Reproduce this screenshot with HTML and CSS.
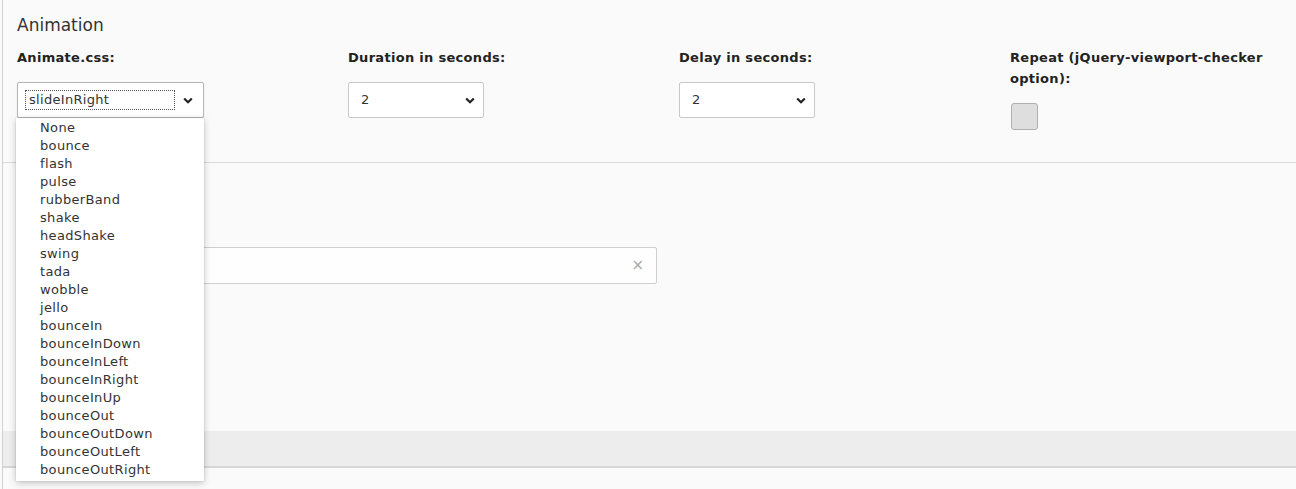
FILE: index.html
```html
<!DOCTYPE html>
<html>
<head>
<meta charset="utf-8">
<link rel="stylesheet" href="styles.css">
</head>
<body>
<div class="panel">
  <section class="top">
    <h2 class="title">Animation</h2>
    <div class="fields">
      <div class="field">
        <div class="label">Animate.css:</div>
        <div class="select select-wide focused">
          <span class="value focus-ring">slideInRight</span>
          <svg class="chev" width="10" height="7" viewBox="0 0 10 7"><polyline points="1.2,1.5 5,5.2 8.8,1.5" fill="none" stroke="#222" stroke-width="2.2"/></svg>
        </div>
      </div>
      <div class="field">
        <div class="label">Duration in seconds:</div>
        <div class="select">
          <span class="value">2</span>
          <svg class="chev" width="10" height="7" viewBox="0 0 10 7"><polyline points="1.2,1.5 5,5.2 8.8,1.5" fill="none" stroke="#222" stroke-width="2.2"/></svg>
        </div>
      </div>
      <div class="field">
        <div class="label">Delay in seconds:</div>
        <div class="select">
          <span class="value">2</span>
          <svg class="chev" width="10" height="7" viewBox="0 0 10 7"><polyline points="1.2,1.5 5,5.2 8.8,1.5" fill="none" stroke="#222" stroke-width="2.2"/></svg>
        </div>
      </div>
      <div class="field">
        <div class="label">Repeat (jQuery-viewport-checker option):</div>
        <div class="checkbox"></div>
      </div>
    </div>
  </section>
  <section class="middle">
    <div class="search">
      <span class="clear">×</span>
    </div>
  </section>
  <div class="band"></div>
  <div class="bottom"></div>

  <ul class="dropdown">
    <li>None</li>
    <li>bounce</li>
    <li>flash</li>
    <li>pulse</li>
    <li>rubberBand</li>
    <li>shake</li>
    <li>headShake</li>
    <li>swing</li>
    <li>tada</li>
    <li>wobble</li>
    <li>jello</li>
    <li>bounceIn</li>
    <li>bounceInDown</li>
    <li>bounceInLeft</li>
    <li>bounceInRight</li>
    <li>bounceInUp</li>
    <li>bounceOut</li>
    <li>bounceOutDown</li>
    <li>bounceOutLeft</li>
    <li>bounceOutRight</li>
  </ul>
</div>
</body>
</html>
```

FILE: styles.css
```css
html, body {
  margin: 0;
  padding: 0;
  background: #fafafa;
}
body {
  font-family: "DejaVu Sans", Verdana, sans-serif;
  color: #333;
  height: 489px;
  overflow: hidden;
}
.panel {
  position: relative;
  margin-left: 2px;
  border-left: 1px solid #d2d2d2;
  min-height: 489px;
}
.top {
  padding: 15px 0 32px 14px;
  border-bottom: 1px solid #d9d9d9;
}
.title {
  margin: 0 0 12px;
  font-size: 17px;
  line-height: 20px;
  font-weight: normal;
  color: #333;
}
.fields {
  display: grid;
  grid-template-columns: 331px 331px 331px 270px;
}
.label {
  font-size: 13px;
  letter-spacing: 0.3px;
  line-height: 21px;
  font-weight: bold;
  color: #222;
  margin-bottom: 14px;
}
.select {
  box-sizing: border-box;
  width: 136px;
  height: 36px;
  background: #fff;
  border: 1px solid #c8c8c8;
  border-radius: 2px;
  display: flex;
  align-items: center;
  padding: 0 8px 0 12px;
  font-size: 13px;
  letter-spacing: 0.3px;
  color: #333;
}
.select-wide {
  width: 187px;
  padding-left: 8px;
  padding-right: 10px;
}
.focused {
  border-color: #b5b5b5;
  box-shadow: 0 1px 2px rgba(0,0,0,0.08);
}
.value {
  flex: 1;
  line-height: 18px;
}
.focus-ring {
  flex: 0 0 auto;
  width: 148px;
  padding-left: 3px;
  box-sizing: border-box;
  outline: 1px dotted #555;
  margin-right: 9px;
}
.chev {
  display: block;
  flex: 0 0 auto;
}
.checkbox {
  box-sizing: border-box;
  width: 27px;
  height: 27px;
  margin-left: 1px;
  background: #dedede;
  border: 1px solid #b0b0b0;
  border-radius: 3px;
}
.middle {
  height: 268px;
  padding: 84px 0 0 14px;
  box-sizing: border-box;
}
.search {
  box-sizing: border-box;
  width: 640px;
  height: 37px;
  background: #fefefe;
  border: 1px solid #cfcfcf;
  border-radius: 2px;
  display: flex;
  justify-content: flex-end;
  align-items: center;
  padding-right: 12px;
}
.clear {
  font-size: 15px;
  color: #aaa;
  line-height: 1;
}
.band {
  height: 35px;
  background: #ededed;
  border-bottom: 2px solid #d6d6d6;
}
.bottom {
  height: 30px;
}
.dropdown {
  position: absolute;
  left: 13px;
  top: 118px;
  width: 188px;
  height: 363px;
  box-sizing: border-box;
  margin: 0;
  padding: 1px 0 0 24px;
  list-style: none;
  background: #fff;
  box-shadow: 0 2px 7px rgba(0,0,0,0.22), 0 0 1px rgba(0,0,0,0.25);
  font-size: 13px;
  letter-spacing: 0.35px;
  line-height: 18px;
  color: #333;
}
```
